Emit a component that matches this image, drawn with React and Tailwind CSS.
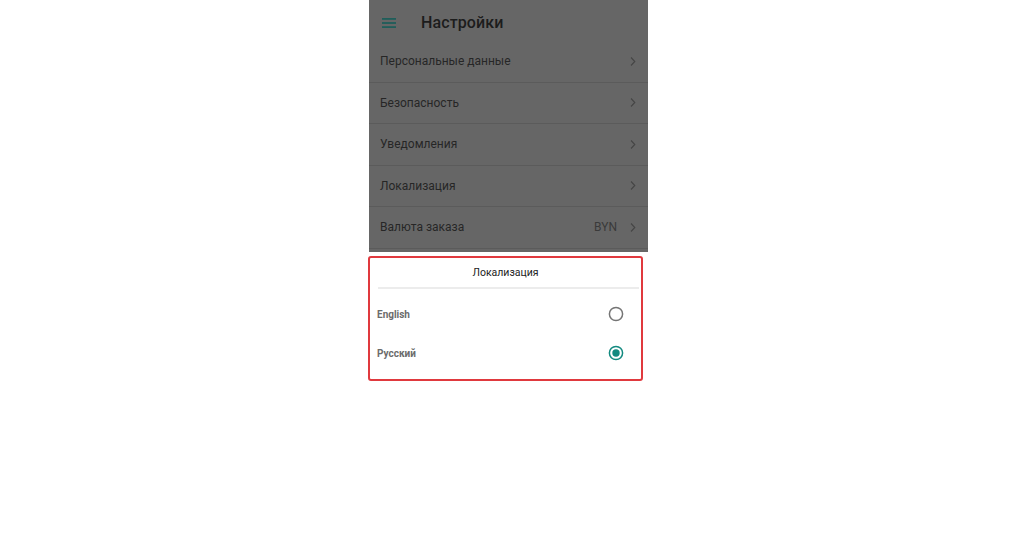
import React from "react";

const rows = [
  { label: "Персональные данные" },
  { label: "Безопасность" },
  { label: "Уведомления" },
  { label: "Локализация" },
  { label: "Валюта заказа", value: "BYN" },
];

const Chevron = () => (
  <svg width="8" height="11" viewBox="0 0 8 11" fill="none">
    <path d="M2 1.5L5.8 5.5L2 9.5" stroke="#454545" strokeWidth="1.1" />
  </svg>
);

const Radio = ({ checked }) => (
  <svg width="16" height="16" viewBox="0 0 16 16">
    <circle
      cx="8"
      cy="8"
      r="6.6"
      fill="none"
      stroke={checked ? "#138a80" : "#757575"}
      strokeWidth="1.5"
    />
    {checked && <circle cx="8" cy="8" r="3.7" fill="#138a80" />}
  </svg>
);

const App = () => {
  return (
    <div className="w-[1016px] h-[553px] bg-white font-['Roboto',sans-serif]">
      <div className="flex flex-col ml-[369px] w-[279px]">
        <div className="bg-[#666666] h-[252px] overflow-hidden flex flex-col">
          <div className="flex items-center h-[41px] pt-[4px] px-[13px] gap-[25px]">
            <svg width="14" height="10" viewBox="0 0 14 10">
              <rect x="0" y="0" width="14" height="1.8" fill="#1f5e5a" />
              <rect x="0" y="4.1" width="14" height="1.8" fill="#1f5e5a" />
              <rect x="0" y="8.2" width="14" height="1.8" fill="#1f5e5a" />
            </svg>
            <span className="text-[16px] text-[#1c1c1c] font-medium tracking-[0.1px]">
              Настройки
            </span>
          </div>
          {rows.map((r) => (
            <div
              key={r.label}
              className="flex items-center justify-between h-[41.5px] pl-[11px] pr-[11px] border-b border-[#5b5b5b] shrink-0"
            >
              <span className="text-[12px] text-[#262626]">{r.label}</span>
              <div className="flex items-center gap-[12px]">
                {r.value && (
                  <span className="text-[12px] text-[#3a3a3a]">{r.value}</span>
                )}
                <Chevron />
              </div>
            </div>
          ))}
        </div>
        <div className="mt-[4px] -ml-[1px] w-[275px] h-[125px] border-2 border-[#e0393e] rounded-[3px] bg-white flex flex-col">
          <div className="h-[29px] flex items-center justify-center text-[10.5px] text-[#222]">
            Локализация
          </div>
          <div className="ml-[8px] mr-[2px] h-[1.5px] bg-[#ececec]" />
          <div className="flex items-center justify-between h-[39px] mt-[6px] pl-[7px] pr-[17px]">
            <span className="text-[10px] font-bold text-[#6b6b6b]">English</span>
            <Radio />
          </div>
          <div className="flex items-center justify-between h-[39px] pl-[7px] pr-[17px]">
            <span className="text-[10px] font-bold text-[#6b6b6b]">Русский</span>
            <Radio checked />
          </div>
        </div>
      </div>
    </div>
  );
};

export default App;
